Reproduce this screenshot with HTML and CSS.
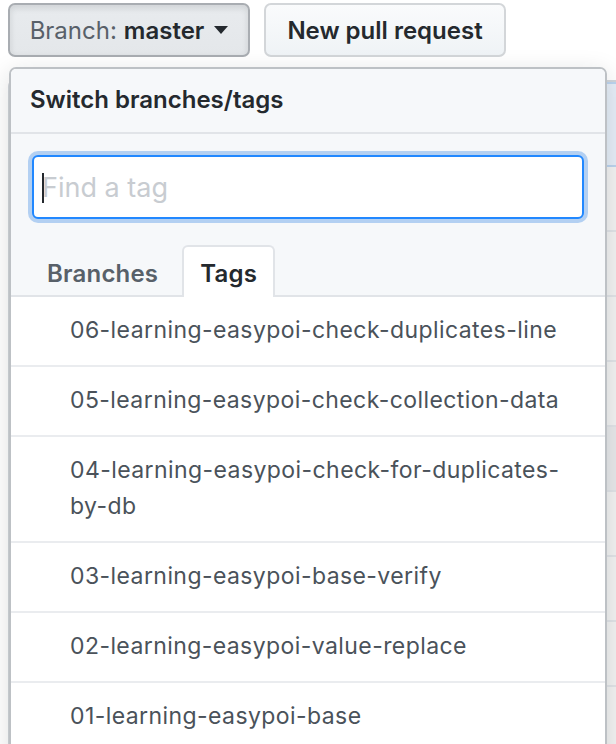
FILE: index.html
```html
<!DOCTYPE html>
<html>
<head>
<meta charset="utf-8">
<link rel="stylesheet" href="styles.css">
</head>
<body>
<div class="page">
  <div class="toolbar">
    <button class="btn btn-selected"><span class="btn-label">Branch:</span> <b>master</b><span class="caret"></span></button>
    <button class="btn btn-plain">New pull request</button>
  </div>

  <div class="repo-box">
    <div class="tease"></div>
    <div class="file-row"></div>
    <div class="file-row"></div>
    <div class="file-row"></div>
    <div class="file-row"></div>
    <div class="file-row shaded"></div>
    <div class="file-row"></div>
    <div class="file-row"></div>
    <div class="file-row"></div>
    <div class="file-row"></div>
    <div class="file-row"></div>
  </div>

  <div class="dropdown">
    <div class="dd-header">Switch branches/tags</div>
    <div class="dd-filters">
      <div class="filter-input">
        <span class="text-caret"></span>
        <span class="placeholder">Find a tag</span>
      </div>
      <div class="tabs">
        <div class="tab">Branches</div>
        <div class="tab tab-selected">Tags</div>
      </div>
    </div>
    <ul class="dd-list">
      <li class="dd-item">06-learning-easypoi-check-duplicates-line</li>
      <li class="dd-item">05-learning-easypoi-check-collection-data</li>
      <li class="dd-item">04-learning-easypoi-check-for-duplicates-by-db</li>
      <li class="dd-item">03-learning-easypoi-base-verify</li>
      <li class="dd-item">02-learning-easypoi-value-replace</li>
      <li class="dd-item">01-learning-easypoi-base</li>
    </ul>
  </div>
</div>
</body>
</html>
```
FILE: styles.css
```css
* { box-sizing: border-box; }
html, body {
  margin: 0;
  padding: 0;
  background: #ffffff;
  overflow: hidden;
  width: 616px;
  height: 744px;
}
body {
  font-family: Inter, "Noto Sans", "Liberation Sans", sans-serif;
  color: #24292e;
}
.page {
  position: relative;
  width: 616px;
  height: 744px;
  overflow: hidden;
}
.toolbar {
  display: flex;
  gap: 14px;
  padding: 3px 8px 0;
}
.btn {
  height: 54px;
  width: 242px;
  border-radius: 7px;
  font-family: inherit;
  font-size: 24px;
  display: flex;
  align-items: center;
  justify-content: center;
  padding: 0;
  color: #24292e;
}
.btn b { font-weight: 600; margin-left: 7px; }
.btn-selected {
  background: linear-gradient(#e8ebee, #e4e7ea);
  border: 2px solid #a9adb2;
  box-shadow: inset 0 3px 6px rgba(27,31,35,0.12);
}
.btn-label { color: #586069; }
.caret {
  display: inline-block;
  margin-left: 10px;
  width: 0;
  height: 0;
  border-top: 8px solid #24292e;
  border-left: 7px solid transparent;
  border-right: 7px solid transparent;
}
.btn-plain {
  background: linear-gradient(#fafbfc, #eff3f6);
  border: 2px solid #d3d6d9;
  font-weight: 600;
}

.repo-box {
  margin: 23px 0 0 8px;
  border: 2px solid #d1d5da;
  border-right: 0;
  border-radius: 6px 0 0 6px;
}
.tease {
  height: 85px;
  background: #e6eef8;
  border-bottom: 2px solid #bcd4ef;
  border-top: 2px solid #bcd4ef;
}
.file-row {
  height: 65px;
  border-bottom: 2px solid #e1e4e8;
  background: #f3f3f3;
}
.file-row.shaded { background: #e8e9eb; }

.dropdown {
  position: absolute;
  left: 9px;
  top: 67px;
  width: 598px;
  height: 700px;
  background: #ffffff;
  border: 2px solid #bdc1c5;
  border-radius: 7px;
  box-shadow: 0 6px 24px rgba(27,31,35,0.15);
  overflow: hidden;
}
.dd-header {
  height: 65px;
  display: flex;
  align-items: center;
  padding: 0 19px 2px;
  background: #f6f8fa;
  border-bottom: 2px solid #e1e4e8;
  font-size: 24px;
  font-weight: 600;
  color: #24292e;
}
.dd-filters {
  background: #f6f8fa;
  padding: 21px 0 0;
  border-bottom: 2px solid #e1e4e8;
}
.filter-input {
  position: relative;
  margin: 0 21px;
  height: 64px;
  background: #ffffff;
  border: 2px solid #2188ff;
  border-radius: 6px;
  box-shadow: 0 0 0 4px #b3d0f2;
  display: flex;
  align-items: center;
  padding-left: 8px;
}
.placeholder {
  font-size: 27px;
  color: #c8ccd1;
}
.text-caret {
  position: absolute;
  left: 8px;
  top: 16px;
  width: 2px;
  height: 30px;
  background: #24292e;
}
.tabs {
  display: flex;
  gap: 4px;
  padding: 0 16px;
  margin-top: 26px;
  margin-bottom: -2px;
}
.tab {
  height: 52px;
  padding: 2px 18px 0;
  display: flex;
  align-items: center;
  font-size: 24px;
  letter-spacing: 0.2px;
  font-weight: 600;
  color: #586069;
  border: 2px solid transparent;
  border-bottom: 0;
  border-radius: 6px 6px 0 0;
}
.tab-selected {
  background: #ffffff;
  color: #24292e;
  border-color: #e1e4e8;
  padding: 2px 16px 0;
}
.dd-list {
  list-style: none;
  margin: 0;
  padding: 0;
}
.dd-item {
  padding: 15px 10px 17px 59px;
  line-height: 36px;
  font-size: 23px;
  letter-spacing: 0.42px;
  color: #4a525a;
  border-bottom: 2px solid #eaecef;
}
```
